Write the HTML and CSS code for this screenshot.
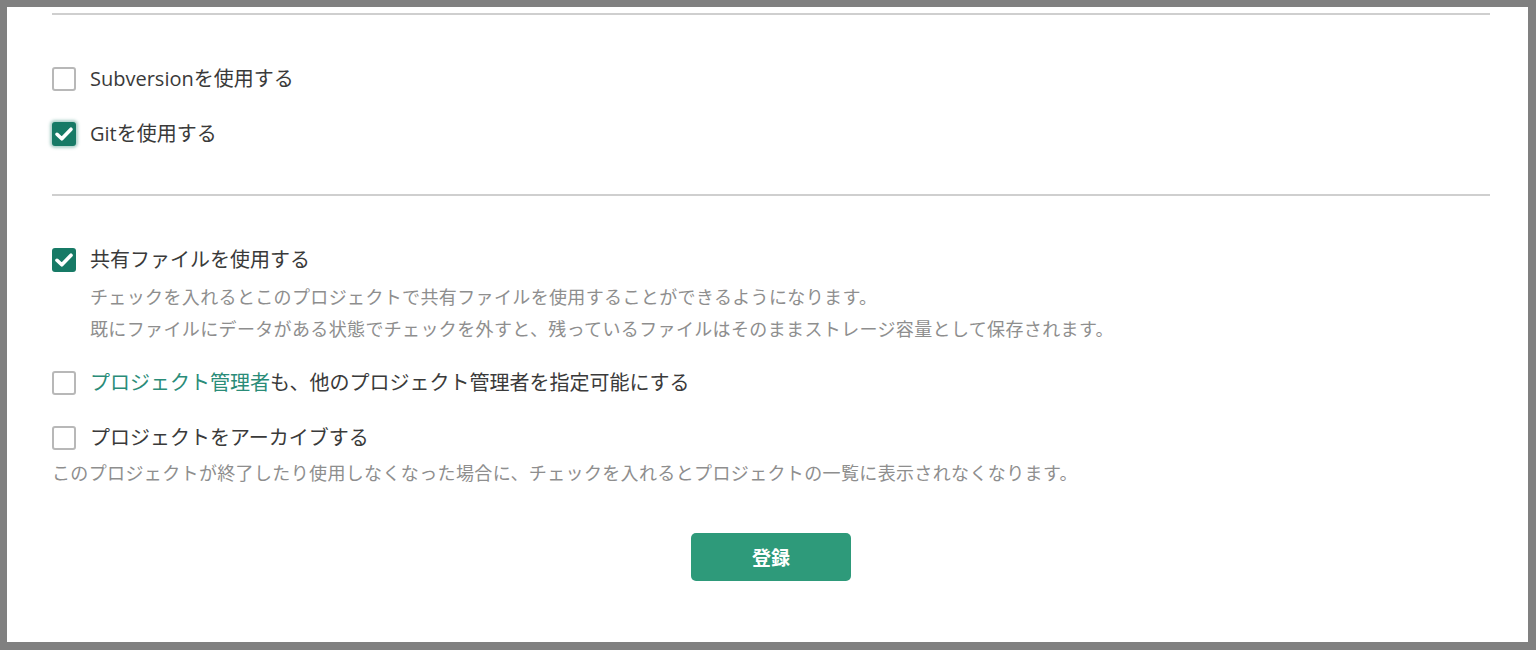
FILE: index.html
```html
<!DOCTYPE html>
<html lang="ja">
<head>
<meta charset="utf-8">
<title>設定</title>
<link rel="stylesheet" href="styles.css">
</head>
<body>
<div class="panel">
  <div class="rule"></div>
  <section class="section first">
    <label class="row">
      <span class="box"></span>
      <span class="label">Subversionを使用する</span>
    </label>
    <label class="row gap">
      <span class="box checked focus"><svg viewBox="0 0 24 24"><path d="M5 12.3 L9.8 16.8 L19 7.2"/></svg></span>
      <span class="label">Gitを使用する</span>
    </label>
  </section>
  <div class="rule"></div>
  <section class="section second">
    <label class="row">
      <span class="box checked"><svg viewBox="0 0 24 24"><path d="M5 12.3 L9.8 16.8 L19 7.2"/></svg></span>
      <span class="label">共有ファイルを使用する</span>
    </label>
    <div class="desc indent">
      <p>チェックを入れるとこのプロジェクトで共有ファイルを使用することができるようになります。</p>
      <p>既にファイルにデータがある状態でチェックを外すと、残っているファイルはそのままストレージ容量として保存されます。</p>
    </div>
    <label class="row pm">
      <span class="box"></span>
      <span class="label"><a class="link">プロジェクト管理者</a>も、他のプロジェクト管理者を指定可能にする</span>
    </label>
    <label class="row gap">
      <span class="box"></span>
      <span class="label">プロジェクトをアーカイブする</span>
    </label>
    <div class="desc archive">
      <p>このプロジェクトが終了したり使用しなくなった場合に、チェックを入れるとプロジェクトの一覧に表示されなくなります。</p>
    </div>
    <div class="actions">
      <button class="submit" type="button">登録</button>
    </div>
  </section>
</div>
</body>
</html>
```

FILE: styles.css
```css
html, body {
  margin: 0;
  padding: 0;
}
body {
  background: #808080;
  padding: 7px 8px 8px 7px;
  height: 650px;
  box-sizing: border-box;
  font-family: "Open Sans", "Noto Sans CJK JP", sans-serif;
  color: #3a3a3a;
}
.panel {
  background: #ffffff;
  height: 635px;
  box-sizing: border-box;
  padding: 6px 38px 0 45px;
}
.rule {
  height: 2px;
  background: #cfcfcf;
}
.section.first {
  padding: 52px 0 48px;
}
.section.second {
  padding-top: 52px;
}
.row {
  display: flex;
  align-items: center;
  height: 24px;
  gap: 14px;
  cursor: pointer;
}
.row.gap {
  margin-top: 31px;
}
.row.pm {
  margin-top: 26px;
}
.box {
  width: 24px;
  height: 24px;
  box-sizing: border-box;
  border: 2px solid #b8b8b8;
  border-radius: 3px;
  background: #fff;
  flex: none;
  display: flex;
  align-items: center;
  justify-content: center;
}
.box.checked {
  background: #177a66;
  border: none;
}
.box.focus {
  box-shadow: 0 0 3px 2px rgba(23, 122, 102, 0.35);
}
.box svg {
  width: 24px;
  height: 24px;
}
.box svg path {
  fill: none;
  stroke: #ffffff;
  stroke-width: 3.6;
  stroke-linecap: round;
  stroke-linejoin: round;
}
.label {
  font-size: 20px;
  line-height: 24px;
  white-space: nowrap;
}
.link {
  color: #2a8c78;
  text-decoration: none;
}
.desc p {
  margin: 0;
  font-size: 18px;
  line-height: 32px;
  letter-spacing: 0.36px;
  color: #8e8e8e;
  white-space: nowrap;
}
.desc.indent {
  margin-top: 9px;
  padding-left: 38px;
}
.desc.archive {
  margin-top: 7px;
}
.actions {
  display: flex;
  justify-content: center;
  margin-top: 44px;
}
.submit {
  width: 160px;
  height: 48px;
  border: none;
  border-radius: 5px;
  background: #2e9a7a;
  color: #ffffff;
  font-family: "Open Sans", "Noto Sans CJK JP", sans-serif;
  font-size: 19px;
  font-weight: 700;
  cursor: pointer;
}
```
